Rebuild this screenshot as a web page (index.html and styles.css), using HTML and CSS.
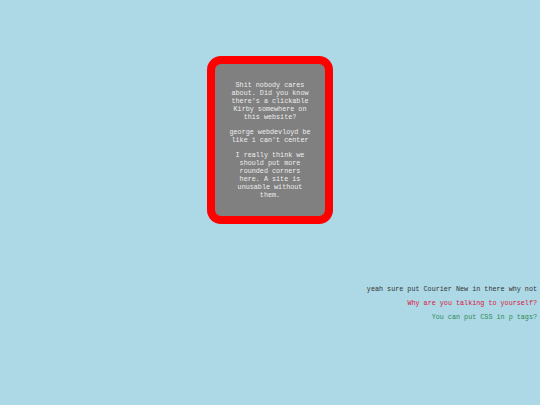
FILE: index.html
```html
<!DOCTYPE html>
<html>
<head>
<meta charset="utf-8">
<link rel="stylesheet" href="styles.css">
</head>
<body>
<div class="card">
  <p>Shit nobody cares about. Did you know there's a clickable Kirby somewhere on this website?</p>
  <p>george webdevloyd be like i can't center</p>
  <p>I really think we should put more rounded corners here. A site is unusable without them.</p>
</div>
<div class="notes">
  <p class="n1">yeah sure put Courier New in there why not</p>
  <p class="n2">Why are you talking to yourself?</p>
  <p class="n3">You can put CSS in p tags?</p>
</div>
</body>
</html>
```
FILE: styles.css
```css
html, body {
  margin: 0;
  padding: 0;
  background: #add8e6;
  font-family: "Liberation Mono", "Courier New", monospace;
  font-size: 6.75px;
}
body {
  padding: 56px 3px 0 3px;
}
.card {
  width: 84px;
  margin: 0 auto;
  padding: 10.5px 13px;
  background: #808080;
  border: 8px solid #ff0000;
  border-radius: 14px;
  color: #eeeeee;
  text-align: center;
}
.card p {
  margin: 6.75px 0;
}
.notes {
  margin-top: 62px;
  text-align: right;
}
.notes p {
  margin: 0 0 6.35px 0;
  line-height: 7.65px;
}
.n1 { color: #333333; }
.n2 { color: #dc143c; }
.n3 { color: #2e8b57; }
```
